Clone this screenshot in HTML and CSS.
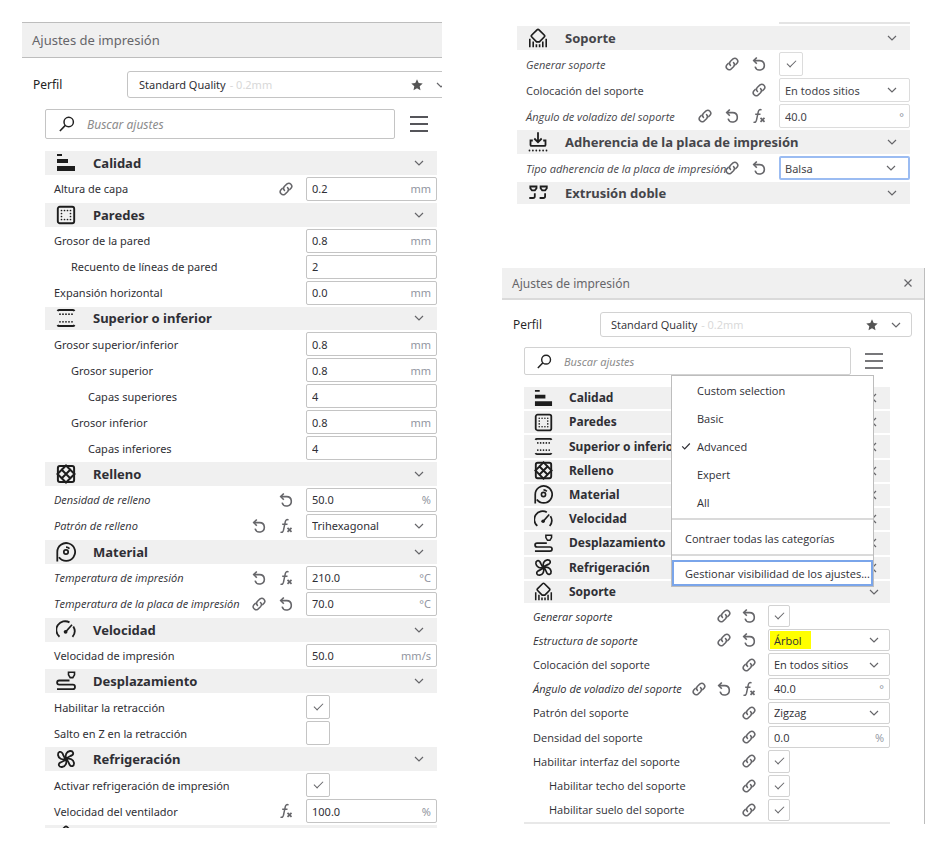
FILE: index.html
```html
<!DOCTYPE html>
<html lang="es">
<head>
<meta charset="utf-8">
<meta name="viewport" content="width=device-width, initial-scale=1">
<title>Ajustes de impresión</title>
<link rel="stylesheet" href="styles.css">
</head>
<body>
<svg class="sprite" aria-hidden="true">
  <symbol id="i-quality" viewBox="0 0 20 20"><path fill="currentColor" d="M1 1h5v2H1zM1 6h11v4H1zM1 13h18v5H1z"/></symbol>
  <symbol id="i-walls" viewBox="0 0 20 20"><rect x="1.800" y="1.800" width="16.400" height="16.400" rx="2" fill="none" stroke="currentColor" stroke-width="1.900"/><rect x="5.500" y="5.500" width="9" height="9" fill="none" stroke="currentColor" stroke-width="1.700" stroke-linecap="round" stroke-dasharray="0 3"/></symbol>
  <symbol id="i-topbottom" viewBox="0 0 20 20"><path d="M1.500 3Q2 2 3 2h14q1 0 1.500 1M1.500 17q.5 1 1.500 1h14q1 0 1.500-1" fill="none" stroke="currentColor" stroke-width="1.900"/><path d="M4 6.200h12.500M4 13.800h12.500" stroke="currentColor" stroke-width="1.800" stroke-linecap="round" stroke-dasharray="0 3"/></symbol>
  <symbol id="i-infill" viewBox="0 0 20 20"><rect x="1.900" y="1.900" width="16.200" height="16.200" rx="2" fill="none" stroke="currentColor" stroke-width="2"/><path d="M10 1.500 1.500 10l8.500 8.500 8.500-8.500zM5 5l10 10M15 5 5 15" fill="none" stroke="currentColor" stroke-width="2"/></symbol>
  <symbol id="i-material" viewBox="0 0 20 20"><path d="M1.300 19.500V10A8.900 8.900 0 1 1 3 15.200" fill="none" stroke="currentColor" stroke-width="1.800"/><circle cx="10" cy="10" r="2.200" fill="none" stroke="currentColor" stroke-width="1.700"/><path d="M10 5.200q2 0 3.500 1.400" fill="none" stroke="currentColor" stroke-width="1.800"/></symbol>
  <symbol id="i-speed" viewBox="0 0 20 20"><path d="M3.500 16.800A8.800 8.800 0 0 1 13.500 2.400M17.300 6.500a8.800 8.800 0 0 1-.8 10.300" fill="none" stroke="currentColor" stroke-width="1.800"/><path d="M10 11.500 16 4.800" stroke="currentColor" stroke-width="1.700"/><circle cx="9.600" cy="11.800" r="1.900" fill="currentColor"/></symbol>
  <symbol id="i-travel" viewBox="0 0 20 20"><path d="M12.500 1.200h6v2.600l-1.700 2.800h-2.600l-1.700-2.800z" fill="none" stroke="currentColor" stroke-width="1.600"/><path d="M13.500 9.500H3.200a1.900 1.900 0 0 0 0 4.200h13.600a2.200 2.200 0 0 1 0 4.400H1" fill="none" stroke="currentColor" stroke-width="1.800"/></symbol>
  <symbol id="i-blade" viewBox="0 0 20 20"><path d="M10 10C8.800 6 10.500 2.500 14 2c3.200-.3 4.300 2.800 1.800 4.400C13.500 7.600 11.500 7.800 10 10z" fill="none" stroke="currentColor" stroke-width="1.800" stroke-linejoin="round"/></symbol>
  <symbol id="i-fan" viewBox="0 0 20 20"><use href="#i-blade"/><use href="#i-blade" transform="rotate(90 10 10)"/><use href="#i-blade" transform="rotate(180 10 10)"/><use href="#i-blade" transform="rotate(270 10 10)"/><circle cx="10" cy="10" r="2.200" fill="currentColor"/></symbol>
  <symbol id="i-support" viewBox="0 0 20 20"><path d="M9 1.800q1-1 2 0l5.200 5.200q1 1 0 2L11.400 13.800H8.600L3.800 9q-1-1 0-2z" fill="none" stroke="currentColor" stroke-width="1.700"/><path d="M1.800 10.800v8.400M5.200 13.500v5.700M8.400 16.300v2.900M11.600 16.300v2.900M14.800 13.500v5.700M18.200 10.800v8.400" stroke="currentColor" stroke-width="1.600"/></symbol>
  <symbol id="i-adhesion" viewBox="0 0 20 20"><path d="M10 .3v9.700M6.300 6.500l3.700 3.700 3.700-3.700M4.800 8.500H2.500v4.400q0 1 1 1h13q1 0 1-1V8.500h-2.300" fill="none" stroke="currentColor" stroke-width="1.800"/><path d="M1.500 18.500h17.500" stroke="currentColor" stroke-width="1.800" stroke-linecap="round" stroke-dasharray="0 3.400"/></symbol>
  <symbol id="i-dual" viewBox="0 0 20 20"><path d="M2.300 3.500h6.200v1.800L6.900 7.400h-3L2.300 5.300zM12.600 3.500h6.200v1.800l-1.600 2.100h-3l-1.600-2.100zM6.800 10.300v2.900q0 1.800-1.800 1.800H1.300M17.100 10.300v2.900q0 1.800-1.800 1.800h-3.700" fill="none" stroke="currentColor" stroke-width="1.800"/></symbol>
  <symbol id="i-down" viewBox="0 0 10 10"><path d="M1 3l4 4 4-4" fill="none" stroke="currentColor" stroke-width="1.200"/></symbol>
  <symbol id="i-left" viewBox="0 0 10 10"><path d="M7 1 3 5l4 4" fill="none" stroke="currentColor" stroke-width="1.200"/></symbol>
  <symbol id="i-link" viewBox="0 0 16 16"><g fill="none" stroke="currentColor" stroke-width="1.500" stroke-linecap="round"><path d="M6.500 9.500a3 3 0 0 1 0-4.200l2.500-2.400a3 3 0 0 1 4.200 4.200l-1.400 1.500"/><path d="M9.500 6.500a3 3 0 0 1 0 4.200l-2.500 2.400a3 3 0 0 1-4.200-4.200l1.400-1.500"/></g></symbol>
  <symbol id="i-reset" viewBox="0 0 16 16"><path d="M2.800 4.600h5.900a4.700 4.700 0 1 1-4.600 6" fill="none" stroke="currentColor" stroke-width="1.600"/><path d="M5.800 1.500 2.700 4.600l3.100 3.100" fill="none" stroke="currentColor" stroke-width="1.600"/></symbol>
  <symbol id="i-fx" viewBox="0 0 16 16"><path d="M10.500 2C8.700 1 7.700 1.900 7.300 3.700L5.500 12.200c-.4 1.700-1.300 2.500-3 1.900M4.200 6.300h5.300" fill="none" stroke="currentColor" stroke-width="1.500"/><path d="M9.500 9.800l4 4M13.500 9.800l-4 4" stroke="currentColor" stroke-width="1.700"/></symbol>
  <symbol id="i-star" viewBox="0 0 12 12"><path fill="currentColor" d="M6 .3l1.700 3.700 4 .5-3 2.700.8 4L6 9.200l-3.500 2 .8-4-3-2.700 4-.5z"/></symbol>
  <symbol id="i-search" viewBox="0 0 16 16"><circle cx="9.700" cy="6" r="4.700" fill="none" stroke="currentColor" stroke-width="1.500"/><path d="M6.300 9.400.9 15" stroke="currentColor" stroke-width="1.600"/></symbol>
  <symbol id="i-close" viewBox="0 0 10 10"><path d="M1.500 1.500l7 7M8.500 1.500l-7 7" stroke="currentColor" stroke-width="1.200"/></symbol>
  <symbol id="i-check" viewBox="0 0 10 10"><path d="M1.200 5.300 3.700 7.800 8.800 2.500" fill="none" stroke="currentColor" stroke-width="1.200"/></symbol>
</svg>

<main class="page">
  <section class="panel panel--main">
    <header class="titlebar"><h1>Ajustes de impresión</h1></header>
    <div class="profile">
      <span class="profile__label" id="pf1">Perfil</span>
      <button class="profile__box" aria-labelledby="pf1"><span>Standard Quality</span><small>- 0.2mm</small><svg class="star"><use href="#i-star"/></svg><svg class="chev"><use href="#i-down"/></svg></button>
    </div>
    <div class="toolbar">
      <label class="search"><svg><use href="#i-search"/></svg><input type="search" placeholder="Buscar ajustes" aria-label="Buscar ajustes"></label>
      <button class="burger" aria-label="Visibilidad"><i></i><i></i><i></i></button>
    </div>
    <div class="list">
      <button class="category"><svg class="icon"><use href="#i-quality"/></svg><span>Calidad</span><svg class="chev"><use href="#i-down"/></svg></button>
      <div class="row"><label for="a1">Altura de capa</label><div class="tools"><svg><use href="#i-link"/></svg></div><div class="field"><input id="a1" value="0.2"><span>mm</span></div></div>
      <button class="category"><svg class="icon"><use href="#i-walls"/></svg><span>Paredes</span><svg class="chev"><use href="#i-down"/></svg></button>
      <div class="row"><label for="a2">Grosor de la pared</label><div class="field"><input id="a2" value="0.8"><span>mm</span></div></div>
      <div class="row row--sub"><label for="a3">Recuento de líneas de pared</label><div class="field"><input id="a3" value="2"></div></div>
      <div class="row"><label for="a4">Expansión horizontal</label><div class="field"><input id="a4" value="0.0"><span>mm</span></div></div>
      <button class="category"><svg class="icon"><use href="#i-topbottom"/></svg><span>Superior o inferior</span><svg class="chev"><use href="#i-down"/></svg></button>
      <div class="row"><label for="a5">Grosor superior/inferior</label><div class="field"><input id="a5" value="0.8"><span>mm</span></div></div>
      <div class="row row--sub"><label for="a6">Grosor superior</label><div class="field"><input id="a6" value="0.8"><span>mm</span></div></div>
      <div class="row row--subsub"><label for="a7">Capas superiores</label><div class="field"><input id="a7" value="4"></div></div>
      <div class="row row--sub"><label for="a8">Grosor inferior</label><div class="field"><input id="a8" value="0.8"><span>mm</span></div></div>
      <div class="row row--subsub"><label for="a9">Capas inferiores</label><div class="field"><input id="a9" value="4"></div></div>
      <button class="category"><svg class="icon"><use href="#i-infill"/></svg><span>Relleno</span><svg class="chev"><use href="#i-down"/></svg></button>
      <div class="row row--changed"><label for="a10">Densidad de relleno</label><div class="tools"><svg><use href="#i-reset"/></svg></div><div class="field"><input id="a10" value="50.0"><span>%</span></div></div>
      <div class="row row--changed"><label for="a11">Patrón de relleno</label><div class="tools"><svg><use href="#i-reset"/></svg><svg><use href="#i-fx"/></svg></div><div class="field"><select id="a11"><option>Trihexagonal</option></select><svg class="chev"><use href="#i-down"/></svg></div></div>
      <button class="category"><svg class="icon"><use href="#i-material"/></svg><span>Material</span><svg class="chev"><use href="#i-down"/></svg></button>
      <div class="row row--changed"><label for="a12">Temperatura de impresión</label><div class="tools"><svg><use href="#i-reset"/></svg><svg><use href="#i-fx"/></svg></div><div class="field"><input id="a12" value="210.0"><span>°C</span></div></div>
      <div class="row row--changed"><label for="a13">Temperatura de la placa de impresión</label><div class="tools"><svg><use href="#i-link"/></svg><svg><use href="#i-reset"/></svg></div><div class="field"><input id="a13" value="70.0"><span>°C</span></div></div>
      <button class="category"><svg class="icon"><use href="#i-speed"/></svg><span>Velocidad</span><svg class="chev"><use href="#i-down"/></svg></button>
      <div class="row"><label for="a14">Velocidad de impresión</label><div class="field"><input id="a14" value="50.0"><span>mm/s</span></div></div>
      <button class="category"><svg class="icon"><use href="#i-travel"/></svg><span>Desplazamiento</span><svg class="chev"><use href="#i-down"/></svg></button>
      <div class="row"><label for="a15">Habilitar la retracción</label><div class="field"><input type="checkbox" id="a15" checked></div></div>
      <div class="row"><label for="a16">Salto en Z en la retracción</label><div class="field"><input type="checkbox" id="a16"></div></div>
      <button class="category"><svg class="icon"><use href="#i-fan"/></svg><span>Refrigeración</span><svg class="chev"><use href="#i-down"/></svg></button>
      <div class="row"><label for="a17">Activar refrigeración de impresión</label><div class="field"><input type="checkbox" id="a17" checked></div></div>
      <div class="row"><label for="a18">Velocidad del ventilador</label><div class="tools"><svg><use href="#i-fx"/></svg></div><div class="field"><input id="a18" value="100.0"><span>%</span></div></div>
    </div>
    <div class="next"><svg class="icon"><use href="#i-support"/></svg></div>
  </section>

  <div class="side">
    <section class="panel panel--extract">
      <div class="previous"></div>
      <div class="list">
        <button class="category"><svg class="icon"><use href="#i-support"/></svg><span>Soporte</span><svg class="chev"><use href="#i-down"/></svg></button>
        <div class="row row--changed"><label for="b1">Generar soporte</label><div class="tools"><svg><use href="#i-link"/></svg><svg><use href="#i-reset"/></svg></div><div class="field"><input type="checkbox" id="b1" checked></div></div>
        <div class="row"><label for="b2">Colocación del soporte</label><div class="tools"><svg><use href="#i-link"/></svg></div><div class="field"><select id="b2"><option>En todos sitios</option></select><svg class="chev"><use href="#i-down"/></svg></div></div>
        <div class="row row--changed"><label for="b3">Ángulo de voladizo del soporte</label><div class="tools"><svg><use href="#i-link"/></svg><svg><use href="#i-reset"/></svg><svg><use href="#i-fx"/></svg></div><div class="field"><input id="b3" value="40.0"><span>°</span></div></div>
        <button class="category"><svg class="icon"><use href="#i-adhesion"/></svg><span>Adherencia de la placa de impresión</span><svg class="chev"><use href="#i-down"/></svg></button>
        <div class="row row--changed"><label for="b4">Tipo adherencia de la placa de impresión</label><div class="tools"><svg><use href="#i-link"/></svg><svg><use href="#i-reset"/></svg></div><div class="field field--focus"><select id="b4"><option>Balsa</option></select><svg class="chev"><use href="#i-down"/></svg></div></div>
        <button class="category category--last"><svg class="icon"><use href="#i-dual"/></svg><span>Extrusión doble</span><svg class="chev"><use href="#i-down"/></svg></button>
      </div>
    </section>

    <section class="panel panel--compact">
      <header class="titlebar"><h2>Ajustes de impresión</h2><button class="close" aria-label="Cerrar"><svg><use href="#i-close"/></svg></button></header>
      <div class="profile">
        <span class="profile__label" id="pf2">Perfil</span>
        <button class="profile__box" aria-labelledby="pf2"><span>Standard Quality</span><small>- 0.2mm</small><svg class="star"><use href="#i-star"/></svg><svg class="chev"><use href="#i-down"/></svg></button>
      </div>
      <div class="toolbar">
        <label class="search"><svg><use href="#i-search"/></svg><input type="search" placeholder="Buscar ajustes" aria-label="Buscar ajustes"></label>
        <div class="anchor">
          <button class="burger" aria-label="Visibilidad"><i></i><i></i><i></i></button>
          <div class="menu" role="menu">
            <button role="menuitem">Custom selection</button>
            <button role="menuitem">Basic</button>
            <button role="menuitem"><svg><use href="#i-check"/></svg>Advanced</button>
            <button role="menuitem">Expert</button>
            <button role="menuitem">All</button>
            <hr>
            <button class="menu__action" role="menuitem">Contraer todas las categorías</button>
            <hr>
            <button class="menu__action menu__action--focus" role="menuitem">Gestionar visibilidad de los ajustes...</button>
          </div>
        </div>
      </div>
      <div class="list">
        <button class="category"><svg class="icon"><use href="#i-quality"/></svg><span>Calidad</span><svg class="chev"><use href="#i-left"/></svg></button>
        <button class="category"><svg class="icon"><use href="#i-walls"/></svg><span>Paredes</span><svg class="chev"><use href="#i-left"/></svg></button>
        <button class="category"><svg class="icon"><use href="#i-topbottom"/></svg><span>Superior o inferior</span><svg class="chev"><use href="#i-left"/></svg></button>
        <button class="category"><svg class="icon"><use href="#i-infill"/></svg><span>Relleno</span><svg class="chev"><use href="#i-left"/></svg></button>
        <button class="category"><svg class="icon"><use href="#i-material"/></svg><span>Material</span><svg class="chev"><use href="#i-left"/></svg></button>
        <button class="category"><svg class="icon"><use href="#i-speed"/></svg><span>Velocidad</span><svg class="chev"><use href="#i-left"/></svg></button>
        <button class="category"><svg class="icon"><use href="#i-travel"/></svg><span>Desplazamiento</span><svg class="chev"><use href="#i-left"/></svg></button>
        <button class="category"><svg class="icon"><use href="#i-fan"/></svg><span>Refrigeración</span><svg class="chev"><use href="#i-left"/></svg></button>
        <button class="category"><svg class="icon"><use href="#i-support"/></svg><span>Soporte</span><svg class="chev"><use href="#i-down"/></svg></button>
        <div class="row row--changed"><label for="c1">Generar soporte</label><div class="tools"><svg><use href="#i-link"/></svg><svg><use href="#i-reset"/></svg></div><div class="field"><input type="checkbox" id="c1" checked></div></div>
        <div class="row row--changed"><label for="c2">Estructura de soporte</label><div class="tools"><svg><use href="#i-link"/></svg><svg><use href="#i-reset"/></svg></div><div class="field field--marked"><select id="c2"><option>Árbol</option></select><svg class="chev"><use href="#i-down"/></svg></div></div>
        <div class="row"><label for="c3">Colocación del soporte</label><div class="tools"><svg><use href="#i-link"/></svg></div><div class="field"><select id="c3"><option>En todos sitios</option></select><svg class="chev"><use href="#i-down"/></svg></div></div>
        <div class="row row--changed"><label for="c4">Ángulo de voladizo del soporte</label><div class="tools"><svg><use href="#i-link"/></svg><svg><use href="#i-reset"/></svg><svg><use href="#i-fx"/></svg></div><div class="field"><input id="c4" value="40.0"><span>°</span></div></div>
        <div class="row"><label for="c5">Patrón del soporte</label><div class="tools"><svg><use href="#i-link"/></svg></div><div class="field"><select id="c5"><option>Zigzag</option></select><svg class="chev"><use href="#i-down"/></svg></div></div>
        <div class="row"><label for="c6">Densidad del soporte</label><div class="tools"><svg><use href="#i-link"/></svg></div><div class="field"><input id="c6" value="0.0"><span>%</span></div></div>
        <div class="row"><label for="c7">Habilitar interfaz del soporte</label><div class="tools"><svg><use href="#i-link"/></svg></div><div class="field"><input type="checkbox" id="c7" checked></div></div>
        <div class="row row--sub"><label for="c8">Habilitar techo del soporte</label><div class="tools"><svg><use href="#i-link"/></svg></div><div class="field"><input type="checkbox" id="c8" checked></div></div>
        <div class="row row--sub"><label for="c9">Habilitar suelo del soporte</label><div class="tools"><svg><use href="#i-link"/></svg></div><div class="field"><input type="checkbox" id="c9" checked></div></div>
      </div>
      <div class="next"></div>
    </section>
  </div>
</main>
</body>
</html>
```
FILE: styles.css
```css
* { box-sizing: border-box; }

body {
  margin: 0;
  background: #fff;
  color: #2f2f35;
  font-family: "Noto Sans", "Open Sans", sans-serif;
  font-size: 11px;
}

button, input, select {
  margin: 0;
  padding: 0;
  border: 0;
  background: none;
  color: inherit;
  font: inherit;
  text-align: left;
  outline: 0;
}

h1, h2 { margin: 0; font-size: inherit; font-weight: 400; }

svg { flex: none; }
.sprite { position: absolute; width: 0; height: 0; }

.page {
  display: grid;
  grid-template-columns: 420fr 423fr;
  column-gap: 60px;
  min-height: 100vh;
  padding: 22px 19px 20px 22px;
}

.side { display: flex; flex-direction: column; gap: 64px; min-width: 0; }

.panel {
  --border: #c4c4c4;
  --field: 131px;
  --inset: 48px;
  --icon: 20px;
  --icon-left: 11px;
  --chev-right: 13px;
  --sub: 17px;
  --tool-gap: 11px;
  --tool-end: 12px;
  display: flex;
  flex-direction: column;
  min-width: 0;
}

.panel--main { overflow: hidden; }
.panel--extract { --border: #dcdcdc; color: #45454a; padding: 0 15px; }

.panel--compact {
  --border: #d2d2d2;
  --field: 122px;
  --inset: 45px;
  --icon: 19px;
  --icon-left: 10px;
  --chev-right: 11px;
  --sub: 16px;
  --tool-gap: 9px;
  --tool-end: 11px;
  flex: 1;
  margin-bottom: 4px;
  border-right: 1px solid #bdbdbd;
}

/* Title bar */
.titlebar {
  display: flex;
  align-items: center;
  justify-content: space-between;
  height: 36px;
  padding: 0 10px;
  border: solid #bdbdbd;
  border-width: 1px 0;
  background: #f0f0f0;
  color: #66666a;
  font-size: 13px;
}
.panel--compact .titlebar {
  height: 32px;
  border-width: 0 0 2px;
  border-color: #dadada;
  font-size: 12px;
}
.close { display: flex; padding: 1px; }
.close svg { width: 10px; height: 10px; }

/* Profile */
.profile { display: flex; align-items: center; margin-top: 13px; padding-left: 11px; }
.profile__label { width: 94px; font-size: 12px; color: #222; }
.profile__box {
  display: flex;
  flex: 1;
  align-items: center;
  height: 27px;
  margin-right: -19px;
  padding: 0 14px 0 11px;
  border: 1px solid var(--border);
  border-radius: 3px;
  white-space: nowrap;
}
.profile__box small { flex: 1; margin-left: 4px; color: #d8d8d8; font-size: inherit; }
.star { width: 12px; height: 12px; color: #555; }
.profile__box .chev { margin-left: 13px; }
.panel--compact .profile { margin-top: 12px; font-family: "Open Sans", sans-serif; }
.panel--compact .profile__label { width: 87px; }
.panel--compact .profile__box { height: 25px; margin-right: 12px; padding: 0 10px; }

/* Search and visibility menu */
.toolbar { display: flex; align-items: center; gap: 15px; margin-top: 11px; padding: 0 14px 0 23px; }
.search {
  display: flex;
  flex: 1;
  align-items: center;
  height: 30px;
  padding-left: 13px;
  border: 1px solid var(--border);
  border-radius: 2px;
}
.search svg { width: 16px; height: 16px; color: #222; }
.search input { flex: 1; min-width: 0; margin-left: 12px; font-size: 12px; font-style: italic; appearance: none; }
.search input::placeholder { color: #8c8c8c; opacity: 1; }
.burger { display: grid; gap: 5px; width: 18px; padding: 1px 0; }
.burger i { height: 2px; background: #55555a; }
.panel--compact .toolbar { margin-top: 10px; padding: 0 41px 0 22px; gap: 14px; }
.panel--compact .search { height: 28px; padding-left: 12px; }
.panel--compact .search svg { width: 15px; height: 15px; }
.panel--compact .search input { font-size: 11px; }
.panel--compact .burger i { background: #77777a; }

.anchor { position: relative; display: flex; }
.menu {
  position: absolute;
  top: 23px;
  right: 9px;
  z-index: 1;
  width: 203px;
  border: 1px solid #bdbdbd;
  background: #fff;
  font-family: "Open Sans", sans-serif;
}
.menu button { display: block; width: 100%; height: 28px; padding-left: 25px; white-space: nowrap; }
.menu button svg { width: 10px; height: 10px; margin-left: -16px; margin-right: 6px; }
.menu .menu__action { padding-left: 13px; }
.menu hr { height: 2px; margin: 2px 0 4px; border: 0; background: #dadada; }
.menu .menu__action--focus { height: 26px; padding-left: 11px; border: 2px solid #7aa5ea; }

/* Settings */
.list {
  display: grid;
  flex: 1;
  grid-template-columns: minmax(0, 1fr);
  grid-auto-rows: 1fr;
  row-gap: 2px;
  margin-top: 12px;
  padding: 0 5px 0 23px;
}
.panel--extract .list { grid-auto-rows: auto; margin-top: 2px; padding: 0; }
.panel--compact .list { margin-top: 12px; padding: 0 34px 0 22px; }

.category {
  display: flex;
  align-items: center;
  min-height: 22px;
  padding: 0 var(--chev-right) 0 var(--icon-left);
  background: #f0f0f0;
  font-size: 13px;
  font-weight: 700;
  line-height: 20px;
}
.panel--extract .category { height: 24px; }
.panel--extract .category--last { height: 22px; }
.panel--compact .category { font-size: 12px; }
.category span { flex: 1; margin-left: calc(var(--inset) - var(--icon) - var(--icon-left)); white-space: nowrap; }
.icon { width: var(--icon); height: var(--icon); color: #1d1d1d; }
.chev { width: 10px; height: 10px; color: #66666a; }

.row { display: flex; align-items: stretch; padding-left: 9px; }
.row label { flex: 1; align-self: center; min-width: 0; white-space: nowrap; }
.row--sub { padding-left: calc(9px + var(--sub)); }
.row--subsub { padding-left: calc(9px + 2 * var(--sub)); }
.row--changed label { font-family: "Open Sans", sans-serif; font-style: italic; }
.panel--extract .row { height: 24px; }
.panel--compact .row { font-family: "Open Sans", sans-serif; }

.tools { display: flex; flex: none; align-items: center; gap: var(--tool-gap); margin-right: var(--tool-end); color: #66666a; }
.tools svg { width: 16px; height: 16px; }

.field { display: flex; flex: none; align-items: center; width: var(--field); }
.field:has(select), .field:has(span), .field:has(input:not([type="checkbox"])) {
  border: 1px solid var(--border);
  border-radius: 2px;
}
.field input, .field select { flex: 1; min-width: 0; height: 100%; padding-left: 5px; appearance: none; }
.field span { padding-right: 5px; color: #9195a0; }
.field .chev { margin-right: calc(var(--chev-right) - 1px); }
.field--focus:has(select) { border: 2px solid #9bbcf2; }
.field--focus select { padding-left: 4px; }
.field--marked select { background: linear-gradient(#ff0, #ff0) 1px 1px / 41px 18px no-repeat; }

.field input[type="checkbox"] {
  display: grid;
  flex: none;
  place-items: center;
  width: 24px;
  padding: 0;
  border: 1px solid var(--border);
  border-radius: 2px;
}
.panel--compact .field input[type="checkbox"] { width: 22px; }
.field input:checked::before {
  content: "";
  width: 8px;
  height: 4px;
  margin-bottom: 3px;
  border: solid #66666a;
  border-width: 0 0 1px 1px;
  transform: rotate(-45deg);
}

/* Edges of the rows scrolled out of view */
.previous { align-self: flex-end; width: var(--field); height: 2px; background: #e4e4e4; }
.next { height: 3px; margin: 2px 5px 0 23px; padding-left: var(--icon-left); overflow: hidden; background: #f0f0f0; }
.panel--compact .next { height: 2px; margin: 1px 34px 0 22px; background: #e8e8e8; }
.next .icon { display: block; }
```
